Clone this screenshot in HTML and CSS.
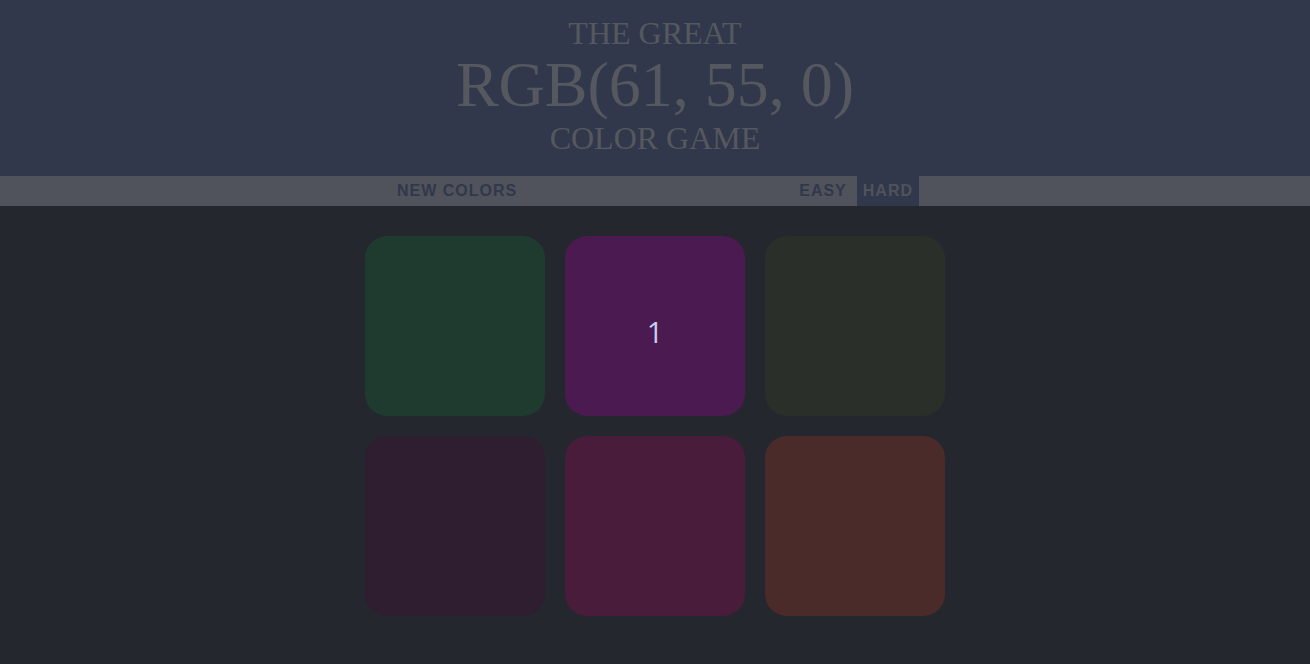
FILE: index.html
```html
<!DOCTYPE html>
<html>
<head>
<meta charset="utf-8">
<link rel="stylesheet" href="styles.css">
</head>
<body>
<header class="hero">
  <div class="hero-line small">THE GREAT</div>
  <div class="hero-line big">RGB(61, 55, 0)</div>
  <div class="hero-line small2">COLOR GAME</div>
</header>
<nav class="stripe">
  <div class="stripe-inner">
    <button class="btn reset">NEW COLORS</button>
    <span class="message"></span>
    <button class="btn mode">EASY</button>
    <button class="btn mode selected">HARD</button>
  </div>
</nav>
<main class="grid">
  <div class="square c1"></div>
  <div class="square c2"><span class="label">1</span></div>
  <div class="square c3"></div>
  <div class="square c4"></div>
  <div class="square c5"></div>
  <div class="square c6"></div>
</main>
</body>
</html>
```
FILE: styles.css
```css
html, body {
  margin: 0;
  padding: 0;
  background: #24272e;
  height: 100%;
}
.hero {
  background: #31384b;
  color: #55585e;
  font-family: "Liberation Serif", serif;
  text-align: center;
  height: 176px;
  box-sizing: border-box;
  padding-top: 17px;
}
.hero-line { line-height: 1; }
.small { font-size: 32px; height: 36px; }
.big { font-size: 64px; height: 69px; }
.small2 { font-size: 32px; }
.stripe {
  background: #50535b;
  height: 30px;
}
.stripe-inner {
  width: 600px;
  margin: 0 auto;
  display: flex;
  height: 30px;
  align-items: stretch;
}
.btn {
  border: none;
  background: none;
  font-family: "Liberation Sans", Arial, sans-serif;
  font-weight: bold;
  font-size: 16px;
  letter-spacing: 1px;
  color: #31384b;
  padding: 0 6px;
  margin: 0;
  height: 30px;
}
.reset { margin-left: 36px; }
.message { flex: 1; }
.mode { margin-left: 4px; }
.mode.selected {
  background: #31384b;
  color: #50535b;
  margin-right: 36px;
}
.grid {
  width: 600px;
  margin: 20px auto 0;
  display: flex;
  flex-wrap: wrap;
}
.square {
  width: 180px;
  height: 180px;
  margin: 10px;
  border-radius: 22px;
  display: flex;
  align-items: center;
  justify-content: center;
}
.label {
  color: #c9d0ee;
  font-family: "Open Sans", sans-serif;
  font-size: 29px;
  line-height: 1;
  margin-top: 10px;
}
.c1 { background: #1f3b2f; }
.c2 { background: #4a1a50; }
.c3 { background: #2a2f29; }
.c4 { background: #2e1e30; }
.c5 { background: #4a1c3b; }
.c6 { background: #4b2b29; }
```
